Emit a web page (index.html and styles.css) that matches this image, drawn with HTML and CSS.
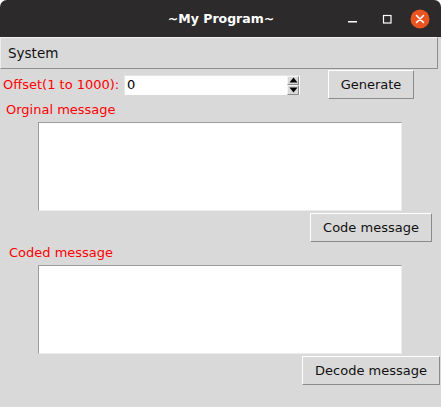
FILE: index.html
```html
<!DOCTYPE html>
<html>
<head>
<meta charset="utf-8">
<link rel="stylesheet" href="styles.css">
</head>
<body>
<div class="window">
  <div class="titlebar">
    <span class="title">~My Program~</span>
    <div class="controls">
      <span class="ctl min"><svg width="12" height="12" viewBox="0 0 12 12"><rect x="1" y="8" width="9" height="1.5" fill="#fff"/></svg></span>
      <span class="ctl max"><svg width="12" height="12" viewBox="0 0 12 12"><rect x="2.5" y="2.5" width="7.5" height="7.5" fill="none" stroke="#fff" stroke-width="1.2"/></svg></span>
      <span class="ctl close"><svg width="20" height="20" viewBox="0 0 20 20"><circle cx="10" cy="10" r="9.5" fill="#e95420"/><path d="M6.5 6.5 L13.5 13.5 M13.5 6.5 L6.5 13.5" stroke="#fff" stroke-width="1.6" stroke-linecap="round"/></svg></span>
    </div>
  </div>
  <div class="menubar"><span class="menu-item">System</span></div>
  <div class="content">
    <div class="row-offset">
      <span class="label label-offset">Offset(1 to 1000):</span>
      <div class="spinbox">
        <span class="spin-value">0</span>
        <div class="spin-arrows">
          <span class="arrow"><svg width="9" height="6" viewBox="0 0 9 6"><path d="M4.5 0.5 L8.5 5.5 L0.5 5.5 Z" fill="#000"/></svg></span>
          <span class="arrow"><svg width="9" height="6" viewBox="0 0 9 6"><path d="M0.5 0.5 L8.5 0.5 L4.5 5.5 Z" fill="#000"/></svg></span>
        </div>
      </div>
      <button class="btn btn-generate">Generate</button>
    </div>
    <div class="label label-orig">Orginal message</div>
    <div class="textbox"></div>
    <button class="btn btn-code">Code message</button>
    <div class="label label-coded">Coded message</div>
    <div class="textbox"></div>
    <button class="btn btn-decode">Decode message</button>
  </div>
</div>
</body>
</html>
```

FILE: styles.css
```css
* { box-sizing: border-box; }
html, body {
  margin: 0;
  padding: 0;
  background: #ffffff;
}
body {
  width: 441px;
  height: 407px;
  overflow: hidden;
  font-family: "DejaVu Sans", sans-serif;
  font-size: 13px;
}
.window {
  width: 441px;
  height: 407px;
  background: #d9d9d9;
  border-radius: 7px 7px 0 0;
  overflow: hidden;
  display: flex;
  flex-direction: column;
}
.titlebar {
  height: 37px;
  background: #2c2a2b;
  position: relative;
  display: flex;
  align-items: center;
  justify-content: center;
}
.title {
  color: #ffffff;
  font-family: "DejaVu Sans", sans-serif;
  font-weight: bold;
  font-size: 12.5px;
  padding-left: 1px;
}
.controls {
  position: absolute;
  right: 11px;
  top: 9px;
  display: flex;
  align-items: center;
}
.ctl {
  display: flex;
  align-items: center;
  justify-content: center;
  height: 20px;
}
.min { width: 12px; margin-right: 22px; }
.max { width: 12px; margin-right: 17px; }
.close { width: 20px; }
.menubar {
  height: 32px;
  width: 438px;
  background: #d9d9d9;
  border-top: 1px solid #f2f2f2;
  border-left: 1px solid #ececec;
  border-bottom: 1px solid #8e8e8e;
  border-right: 1px solid #8e8e8e;
  display: flex;
  align-items: center;
  padding-left: 7px;
  padding-bottom: 1px;
}
.menu-item {
  color: #111;
  font-size: 13.5px;
}
.content {
  flex: 1;
  display: flex;
  flex-direction: column;
  align-items: flex-start;
}
.row-offset {
  margin-top: 1px;
  height: 29px;
  display: flex;
  align-items: center;
}
.label {
  color: #ff0000;
  font-size: 13px;
  line-height: 16px;
  height: 16px;
  white-space: nowrap;
}
.label-offset {
  width: 124px;
  padding-left: 3px;
}
.spinbox {
  width: 176px;
  height: 20px;
  background: #fff;
  border-top: 1px solid #e4e4e4;
  border-left: 1px solid #e4e4e4;
  display: flex;
  align-items: center;
  justify-content: space-between;
}
.spin-value {
  padding-left: 2px;
  color: #000;
  font-size: 13px;
  line-height: 16px;
}
.spin-arrows {
  width: 12px;
  height: 19px;
  margin-right: 1px;
  display: flex;
  flex-direction: column;
}
.arrow {
  flex: 1;
  background: #d9d9d9;
  border-top: 1px solid #f4f4f4;
  border-left: 1px solid #f4f4f4;
  border-bottom: 1px solid #8a8a8a;
  border-right: 1px solid #8a8a8a;
  display: flex;
  align-items: center;
  justify-content: center;
}
.btn {
  font-family: "DejaVu Sans", sans-serif;
  font-size: 13px;
  color: #111;
  background: #d9d9d9;
  border-top: 1px solid #ffffff;
  border-left: 1px solid #ffffff;
  border-bottom: 1px solid #8a8a8a;
  border-right: 1px solid #8a8a8a;
  height: 29px;
  padding: 0;
  margin: 0;
  display: flex;
  align-items: center;
  justify-content: center;
}
.btn-generate {
  width: 86px;
  margin-left: 28px;
}
.label-orig {
  margin-top: 3px;
  padding-left: 6px;
}
.textbox {
  margin-top: 4px;
  margin-left: 38px;
  width: 364px;
  height: 89px;
  background: #ffffff;
  border-top: 1px solid #9a9a9a;
  border-left: 1px solid #9a9a9a;
  border-bottom: 1px solid #ececec;
  border-right: 1px solid #ececec;
}
.btn-code {
  margin-top: 2px;
  margin-left: 310px;
  width: 122px;
}
.label-coded {
  margin-top: 3px;
  padding-left: 9px;
}
.btn-decode {
  margin-top: 2px;
  margin-left: 302px;
  width: 138px;
}
```
